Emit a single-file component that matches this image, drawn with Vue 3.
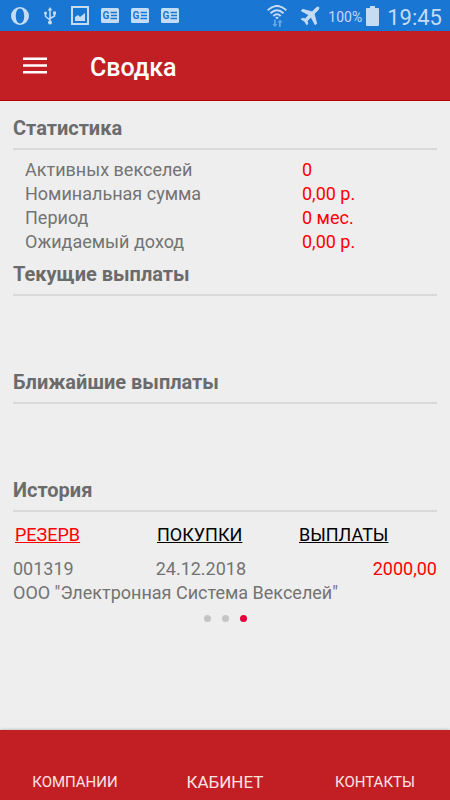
<template>
  <div class="app">
    <div class="status-bar">
      <div class="status-group">
        <svg class="opera" width="18" height="18" viewBox="0 0 18 18">
          <path fill-rule="evenodd" d="M9 0a9 9 0 1 0 0 18A9 9 0 1 0 9 0zM9 1.600c2.600 0 4.200 3.300 4.200 7.400s-1.600 7.400-4.200 7.400S4.800 13.100 4.800 9 6.400 1.600 9 1.600z" />
        </svg>
        <svg class="usb" width="12" height="18" viewBox="0 0 12 18">
          <path d="M6 0l2.300 3.500H3.700z" />
          <path class="line" d="M6 3v12M1.500 6v3.500L6 13M10.500 6v3L6 11.500" />
          <circle cx="6" cy="15.500" r="2" />
          <circle cx="1.500" cy="6" r="1.500" />
          <path d="M9 4.500h3v3H9z" />
        </svg>
        <svg class="picture" width="18" height="19" viewBox="0 0 18 19">
          <path class="line" d="M1 1h16v17H1z" />
          <path d="M4 15v-4l3-2 2 2 5-4v8z" />
        </svg>
        <svg v-for="n in 3" :key="n" class="news" width="18" height="15" viewBox="0 0 18 15">
          <rect width="18" height="15" rx="1.500" />
          <text x="1.500" y="11">G</text>
          <path class="cut" d="M9.500 4.500H16M10 7.500h6M9.500 10.500H16" />
        </svg>
      </div>
      <div class="status-group right">
        <svg class="wifi" width="20" height="22" viewBox="0 0 20 22">
          <path class="line" d="M.7 5.200q9.300-8.500 18.600 0M3.500 8.200q6.500-6 13 0M6.300 11q3.700-3.400 7.400 0" />
          <path d="M8.200 12.300q1.800-1.200 3.600 0L10 14.500z" />
          <path class="faint" d="M7 14.500h1.800V19h1.700L8 22l-2.700-3H7zM12 22v-4.500h-1.500l2.500-3 2.700 3h-1.900V22z" />
        </svg>
        <svg class="plane" width="19" height="19" viewBox="2 3 19 19">
          <g transform="rotate(45 12 12)">
            <path d="M22 16v-2l-8.500-5V3.500C13.500 2.700 12.800 1 12 1s-1.500 1.700-1.500 2.500V9L2 14v2l8.500-2.500V19L8 20.500V22l4-1 4 1v-1.500L13.500 19v-5.500z" />
          </g>
        </svg>
        <span class="percent">100%</span>
        <svg class="battery" width="13" height="20" viewBox="0 0 13 20">
          <path d="M4 0h5v2h3a1 1 0 0 1 1 1v16a1 1 0 0 1-1 1H1a1 1 0 0 1-1-1V3a1 1 0 0 1 1-1h3z" />
        </svg>
        <span class="clock">19:45</span>
      </div>
    </div>

    <header class="toolbar">
      <button class="menu" type="button" aria-label="Меню">
        <svg width="24" height="17" viewBox="0 0 24 17">
          <path d="M0 .5h24V3H0zM0 7.200h24v2.500H0zM0 14h24v2.500H0z" />
        </svg>
      </button>
      <h1>Сводка</h1>
    </header>

    <main class="content">
      <section>
        <h2>Статистика</h2>
        <dl class="stats">
          <template v-for="item in stats" :key="item.label">
            <dt>{{ item.label }}</dt>
            <dd>{{ item.value }}</dd>
          </template>
        </dl>
      </section>

      <section class="payments">
        <h2>Текущие выплаты</h2>
      </section>

      <section class="payments">
        <h2>Ближайшие выплаты</h2>
      </section>

      <section>
        <h2>История</h2>
        <nav class="tabs">
          <a
            v-for="(tab, index) in tabs"
            :key="tab"
            href="#"
            :class="{ active: index === activeTab }"
            @click.prevent="activeTab = index"
          >{{ tab }}</a>
        </nav>
        <div class="record">
          <span>001319</span>
          <span>24.12.2018</span>
          <span class="amount">2000,00</span>
          <span class="company">ООО "Электронная Система Векселей"</span>
        </div>
        <div class="dots">
          <button
            v-for="n in 3"
            :key="n"
            type="button"
            :class="{ active: n === page }"
            :aria-label="'Страница ' + n"
            @click="page = n"
          ></button>
        </div>
      </section>
    </main>

    <nav class="bottom-nav">
      <a href="#">КОМПАНИИ</a>
      <a href="#" class="current">КАБИНЕТ</a>
      <a href="#">КОНТАКТЫ</a>
    </nav>
  </div>
</template>

<script setup>
import { ref } from 'vue'

const stats = [
  { label: 'Активных векселей', value: '0' },
  { label: 'Номинальная сумма', value: '0,00 р.' },
  { label: 'Период', value: '0 мес.' },
  { label: 'Ожидаемый доход', value: '0,00 р.' }
]

const tabs = ['РЕЗЕРВ', 'ПОКУПКИ', 'ВЫПЛАТЫ']

const activeTab = ref(0)
const page = ref(3)
</script>

<style>
body {
  background: #eee;
}
</style>

<style scoped>
.app {
  display: flex;
  flex-direction: column;
  min-height: 100vh;
  font-family: Roboto, 'Liberation Sans', sans-serif;
  font-size: 18px;
  line-height: 24px;
  color: #737373;
  background: #eee;
}

.status-bar {
  display: flex;
  justify-content: space-between;
  height: 31px;
  padding: 0 8px 0 11px;
  background: #1976d2;
  color: #c5dcf4;
}

.status-group {
  display: flex;
  align-items: center;
  gap: 12px;
}

.status-group svg {
  fill: #c5dcf4;
}

.status-group .line {
  fill: none;
  stroke: #c5dcf4;
  stroke-width: 2;
}

.status-group .usb {
  margin: 0 3px;
}

.usb .line {
  stroke-width: 1.5;
}

.news text {
  font-size: 10px;
  font-weight: 700;
  fill: #1976d2;
}

.news .cut {
  stroke: #1976d2;
  stroke-width: 1.5;
}

.wifi .faint {
  fill: #6ba7e2;
}

.right {
  gap: 4px;
}

.plane {
  margin: 0 4px 0 10px;
  stroke: #c5dcf4;
  stroke-width: 0.8;
}

.percent {
  padding-top: 2px;
  font-size: 14px;
}

.clock {
  padding-top: 4px;
  margin-left: 4px;
  font-size: 22px;
}

.toolbar {
  display: flex;
  align-items: center;
  height: 70px;
  box-sizing: border-box;
  padding: 0 23px;
  border-bottom: 1px solid #b90000;
  background: #c21f25;
}

.menu {
  display: flex;
  padding: 0;
  border: none;
  background: none;
  cursor: pointer;
}

.menu svg {
  fill: #fff;
}

h1 {
  margin: 0 0 0 43px;
  padding-top: 4px;
  font-size: 25px;
  font-weight: 500;
  color: #fff;
}

.content {
  flex: 1;
  padding: 15px 13px;
}

h2 {
  margin: 0;
  padding-bottom: 8px;
  border-bottom: 2px solid #d9d9d9;
  font-size: 20px;
  font-weight: 700;
  color: #6b6b6b;
}

.stats {
  display: grid;
  grid-template-columns: 277fr 135fr;
  margin: 0;
  padding: 8px 0 8px 12px;
}

dd {
  margin: 0;
  color: #f00;
}

.payments {
  padding-bottom: 74px;
}

.tabs,
.record {
  display: grid;
  grid-template-columns: repeat(3, 1fr);
  column-gap: 4px;
}

.tabs {
  padding: 11px 0 10px 2px;
}

.tabs a {
  color: #000;
  text-decoration: underline;
}

.tabs a.active {
  color: #f00;
}

.amount {
  text-align: right;
  color: #f00;
}

.record .company {
  grid-column: 1 / -1;
}

.dots {
  display: flex;
  justify-content: center;
  gap: 11px;
  padding-top: 10px;
}

.dots button {
  width: 7px;
  height: 7px;
  padding: 0;
  border: none;
  border-radius: 50%;
  background: #c4c4c4;
  cursor: pointer;
}

.dots button.active {
  background: #e6003a;
}

.bottom-nav {
  display: grid;
  grid-template-columns: repeat(3, 1fr);
  align-items: end;
  height: 70px;
  box-sizing: border-box;
  padding-bottom: 6px;
  background: #c21f25;
  box-shadow: 0 0 3px rgba(0, 0, 0, 0.3);
}

.bottom-nav a {
  font-size: 15px;
  text-align: center;
  text-decoration: none;
  color: #fbe3e4;
}

.bottom-nav a.current {
  font-size: 17px;
}
</style>
